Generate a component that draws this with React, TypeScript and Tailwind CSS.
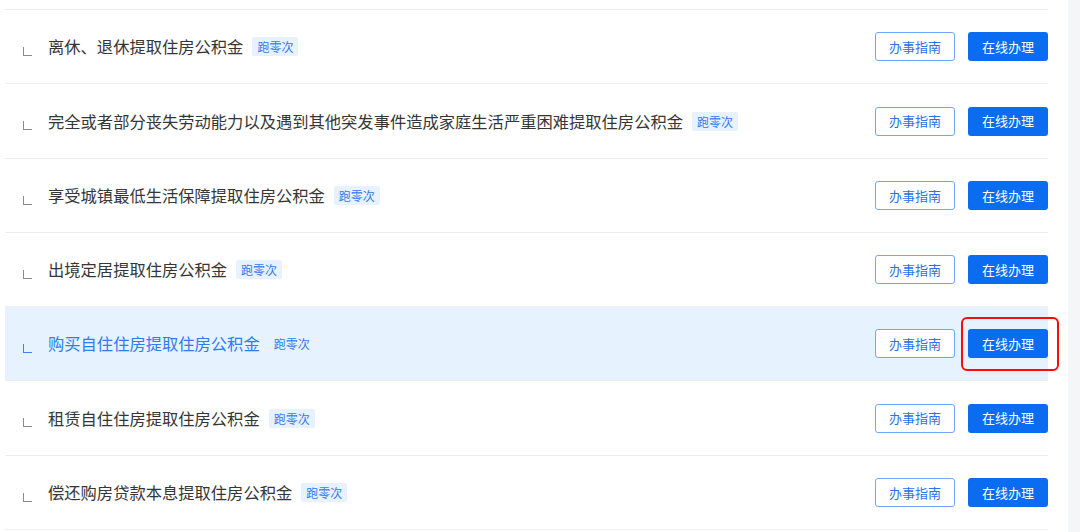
const items = [
  { title: '离休、退休提取住房公积金', h: 'h-[74px]' },
  { title: '完全或者部分丧失劳动能力以及遇到其他突发事件造成家庭生活严重困难提取住房公积金', h: 'h-[75px]' },
  { title: '享受城镇最低生活保障提取住房公积金', h: 'h-[74px]' },
  { title: '出境定居提取住房公积金', h: 'h-[74px]' },
  { title: '购买自住住房提取住房公积金', h: 'h-[74px]', active: true },
  { title: '租赁自住住房提取住房公积金', h: 'h-[75px]' },
  { title: '偿还购房贷款本息提取住房公积金', h: 'h-[74px]' },
]

function Corner({ active }: { active?: boolean }) {
  return (
    <span
      className={`mt-[9px] h-[9px] w-[9px] shrink-0 border-b border-l ${active ? 'border-[#3b82f0]' : 'border-[#8a8a8a]'}`}
    />
  )
}

function Row({ title, h, active }: { title: string; h: string; active?: boolean }) {
  return (
    <div
      className={`relative flex ${h} items-center border-b border-[#ededed] pl-[18px] ${active ? 'bg-[#e6f2fe]' : 'bg-white'}`}
    >
      <Corner active={active} />
      <span className={`ml-[16px] text-[16.3px] ${active ? 'text-[#2f7cf2]' : 'text-[#363636]'}`}>{title}</span>
      <span className="ml-[9px] rounded-[2px] bg-[#e8f1fe] px-[5px] text-[12px] leading-[19px] text-[#2f79ee]">跑零次</span>
      <div className="ml-auto flex gap-[13px]">
        <button className="h-[29px] w-[80px] rounded-[3px] border border-[#6fa8f6] bg-white text-[13px] text-[#2a72e6]">
          办事指南
        </button>
        <button className="h-[29px] w-[80px] rounded-[3px] bg-[#0a6cf1] text-[13px] text-white">在线办理</button>
      </div>
      {active && (
        <div className="pointer-events-none absolute left-[956px] top-[10px] h-[54px] w-[98px] rounded-[6px] border-2 border-[#ff0a0a]" />
      )}
    </div>
  )
}

export default function App() {
  return (
    <div
      className="flex h-[532px] w-[1080px] overflow-hidden bg-white"
      style={{ fontFamily: '"Noto Sans CJK SC", "Noto Sans", sans-serif' }}
    >
      <div className="ml-[5px] w-[1043px]">
        <div className="h-[10px] border-b border-[#ededed]" />
        {items.map((it) => (
          <Row key={it.title} title={it.title} h={it.h} active={it.active} />
        ))}
      </div>
      <div className="ml-auto h-full w-[12px] bg-[#f5f6f8]" />
    </div>
  )
}
